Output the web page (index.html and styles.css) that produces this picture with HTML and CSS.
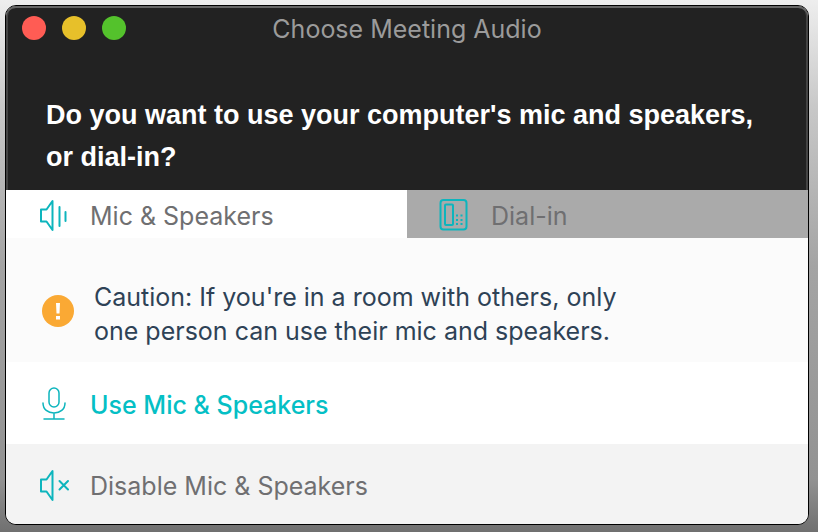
FILE: index.html
```html
<!DOCTYPE html>
<html lang="en">
<head>
    <meta charset="UTF-8">
    <meta name="viewport" content="width=device-width, initial-scale=1.0">
    <title>Choose Meeting Audio</title>
    <link rel="stylesheet" href="styles.css">
</head>
<body>
    <main class="window">
        <header class="header">
            <div class="titlebar">
                <div class="controls">
                    <button type="button" class="control close" aria-label="Close"></button>
                    <button type="button" class="control minimize" aria-label="Minimize"></button>
                    <button type="button" class="control maximize" aria-label="Maximize"></button>
                </div>
                <h1 class="title">Choose Meeting Audio</h1>
            </div>
            <h2 class="question">Do you want to use your computer's mic and speakers, or dial-in?</h2>
        </header>

        <div class="tabs" role="tablist">
            <button type="button" class="tab active" role="tab" aria-selected="true">
                <svg class="icon" viewBox="0 0 32 36" aria-hidden="true">
                    <path d="M3 11.500h5.500L14.500 3v29l-6-8.500H3z" />
                    <path d="M21.500 9v19M27.500 14v9" />
                </svg>
                Mic &amp; Speakers
            </button>
            <button type="button" class="tab" role="tab" aria-selected="false">
                <svg class="icon" viewBox="0 0 32 36" aria-hidden="true">
                    <rect x="1.500" y="2" width="26" height="29.500" rx="3" />
                    <rect x="6" y="6.500" width="8" height="20.500" rx="1" />
                    <path class="keys" d="M17 17.500h2M21.500 17.500h2M17 22h2M21.500 22h2M17 26h2M21.500 26h2" />
                </svg>
                Dial-in
            </button>
        </div>

        <div class="caution">
            <svg class="warning" viewBox="0 0 32 32" aria-hidden="true">
                <circle cx="16" cy="16" r="16" />
                <path d="M14 8h4l-.5 10.500h-3zM14 21h4v3.500h-4z" />
            </svg>
            <p>Caution: If you're in a room with others, only one person can use their mic and speakers.</p>
        </div>

        <button type="button" class="option use">
            <svg class="icon" viewBox="0 0 32 36" aria-hidden="true">
                <rect x="11" y="1" width="10" height="19" rx="5" />
                <path d="M5 16c0 6.500 5 10 11 10s11-3.500 11-10M16 26v6M6 32h20" />
            </svg>
            Use Mic &amp; Speakers
        </button>
        <button type="button" class="option disable">
            <svg class="icon" viewBox="0 0 32 36" aria-hidden="true">
                <path d="M3 11.500h5.500L14.500 3v29l-6-8.500H3z" />
                <path d="M21.500 13l8.500 8.500M30 13l-8.500 8.500" />
            </svg>
            Disable Mic &amp; Speakers
        </button>
    </main>
</body>
</html>
```

FILE: styles.css
```css
* {
    box-sizing: border-box;
}
body {
    margin: 0;
    padding: 5px 9px 7px 5px;
    min-height: 100vh;
    display: flex;
    font-family: Inter, sans-serif;
    background: linear-gradient(#eeeeee, #c8c8c8 20%, #a4a4a4 50%, #929292 90%, #707070);
}
button {
    border: none;
    padding: 0;
    font-family: inherit;
    cursor: pointer;
}
.window {
    flex: 1;
    display: flex;
    flex-direction: column;
    border: 1px solid #000;
    border-radius: 11px;
    overflow: hidden;
    background: #fff;
}
.header {
    height: 184px;
    padding: 0 38px;
    background: #222;
    border-radius: 10px 10px 0 0;
    box-shadow: inset 0 2px 0 #666, inset 2px 0 0 #444, inset -2px 0 0 #444;
}
.titlebar {
    display: grid;
    grid-template-columns: 120px 1fr 120px;
    align-items: center;
    height: 44px;
    margin: 0 -22px;
}
.controls {
    display: flex;
    gap: 16px;
}
.control {
    width: 24px;
    height: 24px;
    border-radius: 50%;
}
.close {
    background: #ff5c54;
}
.minimize {
    background: #e7c02a;
}
.maximize {
    background: #54c22c;
}
.title {
    margin: 0;
    padding-top: 2px;
    text-align: center;
    font-size: 25px;
    line-height: 30px;
    font-weight: 400;
    color: #9b9b9b;
}
.question {
    margin: 44px 0 0 2px;
    font-family: "Liberation Sans", Arial, sans-serif;
    font-size: 27px;
    line-height: 42px;
    font-weight: 700;
    color: #fff;
}
.tabs {
    display: grid;
    grid-template-columns: 1fr 1fr;
    height: 48px;
}
.tab,
.option {
    display: flex;
    align-items: center;
    gap: 20px;
    padding: 4px 32px 0;
    font-size: 25px;
    color: #6f6f71;
    text-align: left;
}
.tab {
    background: #aaa;
}
.active {
    background: #fff;
}
.icon {
    width: 32px;
    height: 36px;
    flex: none;
    fill: none;
    stroke: #0db5bd;
    stroke-width: 2;
    stroke-linejoin: round;
    stroke-linecap: round;
}
.keys {
    stroke-linecap: butt;
}
.caution {
    display: flex;
    align-items: center;
    gap: 20px;
    height: 124px;
    padding: 22px 36px 0;
    background: #fbfbfb;
}
.caution p {
    margin: 0;
    padding-top: 6px;
    max-width: 560px;
    font-size: 25px;
    line-height: 34px;
    color: #2e4256;
}
.warning {
    width: 32px;
    height: 32px;
    flex: none;
    fill: #faa934;
}
.warning path {
    fill: #fff;
}
.option {
    height: 82px;
}
.use {
    background: #fff;
    color: #05bfc5;
    font-weight: 500;
}
.use .icon {
    stroke-width: 1.5;
}
.disable {
    flex: 1;
    background: #f3f3f3;
}
```
